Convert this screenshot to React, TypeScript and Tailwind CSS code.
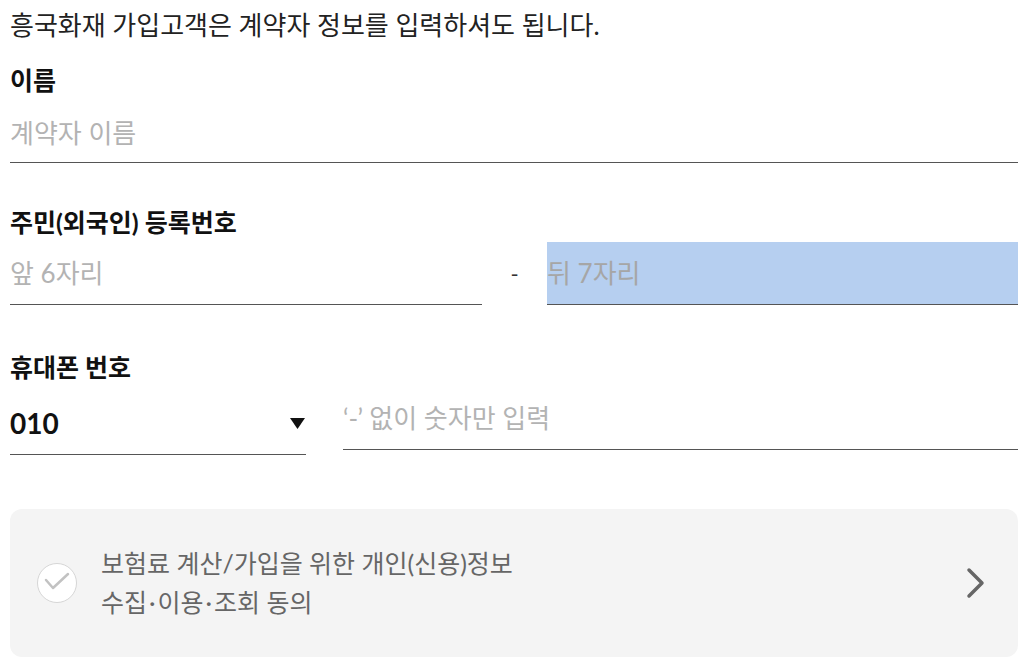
const font = "font-['Lato','Noto_Sans_CJK_KR',sans-serif]";

function Label({ children }: { children: string }) {
  return (
    <div className="h-[38px] flex items-center text-[25px] font-bold text-[#111]">{children}</div>
  );
}

export default function App() {
  return (
    <div className={`w-[1020px] h-[670px] bg-white pl-[10px] pr-[2px] overflow-hidden ${font}`}>
      <p className="h-[50px] flex items-center text-[26px] text-[#222]">
        흥국화재 가입고객은 계약자 정보를 입력하셔도 됩니다.
      </p>

      {/* 이름 */}
      <div className="mt-[12px]">
        <Label>이름</Label>
        <input
          placeholder="계약자 이름"
          className="block w-full h-[63px] pt-[3px] border-b border-[#555] text-[26px] outline-none placeholder:text-[#b3b3b3]"
        />
      </div>

      {/* 주민등록번호 */}
      <div className="mt-[41px]">
        <Label>주민(외국인) 등록번호</Label>
        <div className="flex items-center">
          <input
            placeholder="앞 6자리"
            className="block w-[472px] h-[63px] border-b border-[#555] text-[26px] outline-none placeholder:text-[#b3b3b3]"
          />
          <span className="w-[65px] text-center text-[22px] text-[#333]">-</span>
          <input
            placeholder="뒤 7자리"
            className="block flex-1 h-[63px] border-b border-[#555] bg-[#b6cff0] text-[26px] outline-none placeholder:text-[#a6a6a6]"
          />
        </div>
      </div>

      {/* 휴대폰 번호 */}
      <div className="mt-[44px]">
        <Label>휴대폰 번호</Label>
        <div className="flex items-start">
          <div className="mt-[5px] w-[296px] h-[63px] border-b border-[#555] flex items-center justify-between">
            <span className="text-[28px] font-bold text-[#111]">010</span>
            <svg width="15" height="11" viewBox="0 0 15 11" className="mr-[1px]">
              <polygon points="0,0 15,0 7.5,11" fill="#111" />
            </svg>
          </div>
          <input
            placeholder="‘-’ 없이 숫자만 입력"
            className="ml-[37px] block flex-1 h-[63px] border-b border-[#555] text-[26px] outline-none placeholder:text-[#b3b3b3]"
          />
        </div>
      </div>

      {/* 동의 */}
      <div className="mt-[54px] h-[148px] rounded-[12px] bg-[#f4f4f4] flex items-center pl-[27px] pr-[32px]">
        <div className="w-[40px] h-[40px] rounded-full bg-white border border-[#d6d6d6] shrink-0">
          <svg width="40" height="40" viewBox="0 0 40 40" className="-m-px">
            <path d="M9 17 L16 25 L31 11" fill="none" stroke="#c2c2c2" strokeWidth="2.5" strokeLinecap="round" strokeLinejoin="round" />
          </svg>
        </div>
        <div className="ml-[24px] flex-1 text-[25px] leading-[39px] text-[#666]">
          <div>보험료 계산/가입을 위한 개인(신용)정보</div>
          <div>
            수집<span className="mx-[2px]">·</span>이용<span className="mx-[2px]">·</span>조회 동의
          </div>
        </div>
        <svg width="20" height="32" viewBox="0 0 20 32">
          <path d="M3 3 L16 16 L3 29" fill="none" stroke="#666" strokeWidth="3.5" strokeLinecap="round" strokeLinejoin="round" />
        </svg>
      </div>
    </div>
  );
}
